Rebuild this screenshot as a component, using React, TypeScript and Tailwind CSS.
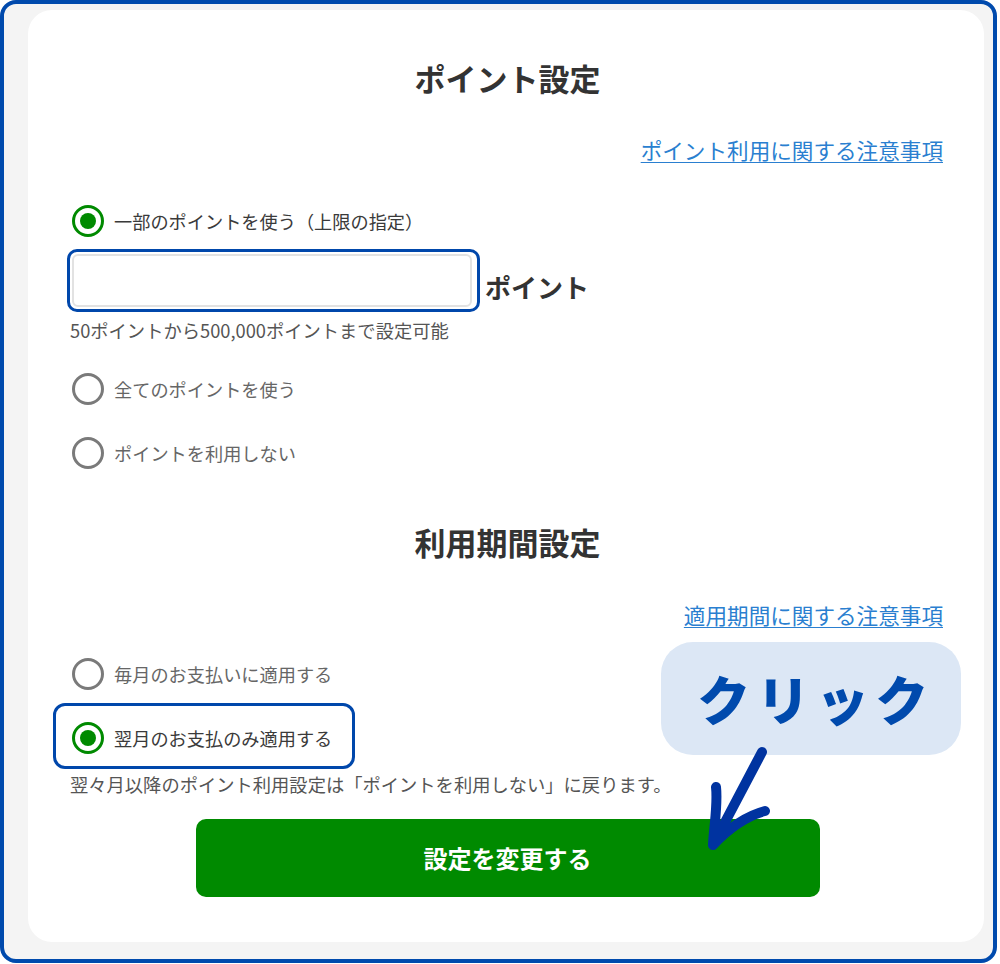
import React from "react";

const FONT = { fontFamily: '"Noto Sans CJK JP", "Noto Sans", sans-serif' };

function Radio({ checked }: { checked?: boolean }) {
  return checked ? (
    <span className="flex h-[32px] w-[32px] shrink-0 items-center justify-center rounded-full border-[3px] border-[#008a00] bg-white">
      <span className="h-[16px] w-[16px] rounded-full bg-[#008a00]" />
    </span>
  ) : (
    <span className="h-[32px] w-[32px] shrink-0 rounded-full border-[3px] border-[#7a7a7a] bg-white" />
  );
}

function Option({ label, checked }: { label: string; checked?: boolean }) {
  return (
    <label className="flex items-center gap-[10px]">
      <Radio checked={checked} />
      <span className={`text-[18.2px] leading-[24px] ${checked ? "text-[#3a3a3a]" : "text-[#666]"}`}>
        {label}
      </span>
    </label>
  );
}

export default function App() {
  return (
    <div style={FONT} className="h-[964px] w-[1000px] bg-white">
      <div className="flex h-[963px] w-[997px] rounded-[16px] border-[4px] border-[#004aad] bg-[#f4f4f4] pb-[17px] pl-[24px] pr-[9px] pt-[6px]">
        <div className="relative flex-1 rounded-[24px] bg-white pb-[43px] pl-[44px] pr-[41px] pt-[48px]">
          <h2 className="text-center text-[31px] font-bold leading-[40px] text-[#333]">ポイント設定</h2>

          <div className="mt-[38px] text-right">
            <a href="#" className="text-[21.6px] leading-[28px] text-[#2a7fd0] underline decoration-1 underline-offset-[3px]">
              ポイント利用に関する注意事項
            </a>
          </div>

          <div className="mt-[41px]">
            <Option label="一部のポイントを使う（上限の指定）" checked />
          </div>

          <div className="ml-[-5px] mt-[12px] flex">
            <div className="rounded-[10px] border-[3px] border-[#0047ab] p-[2px] pr-[5px]">
              <input className="block h-[53px] w-[400px] rounded-[6px] border-2 border-[#e2e2e2] bg-white px-3 text-[18px] outline-none" />
            </div>
            <span className="mb-[9px] ml-[5px] self-end text-[26px] font-bold leading-[32px] text-[#333]">ポイント</span>
          </div>

          <p className="ml-[-2px] mt-[6px] text-[18.3px] leading-[24px] text-[#555]">
            50ポイントから500,000ポイントまで設定可能
          </p>

          <div className="mt-[31px]">
            <Option label="全てのポイントを使う" />
          </div>
          <div className="mt-[32px]">
            <Option label="ポイントを利用しない" />
          </div>

          <h2 className="mt-[53px] text-center text-[31px] font-bold leading-[40px] text-[#333]">利用期間設定</h2>

          <div className="mt-[39px] text-right">
            <a href="#" className="text-[21.6px] leading-[28px] text-[#2a7fd0] underline decoration-1 underline-offset-[3px]">
              適用期間に関する注意事項
            </a>
          </div>

          <div className="mt-[29px]">
            <Option label="毎月のお支払いに適用する" />
          </div>

          <div className="ml-[-19px] mt-[13px] inline-flex rounded-[12px] border-[3px] border-[#0047ab] pb-[12px] pl-[16px] pr-[20px] pt-[16px]">
            <Option label="翌月のお支払のみ適用する" checked />
          </div>

          <p className="ml-[-2px] mt-[3px] text-[18.3px] leading-[24px] text-[#555]">
            翌々月以降のポイント利用設定は「ポイントを利用しない」に戻ります。
          </p>

          <button className="mx-auto mt-[23px] flex h-[78px] w-[624px] items-center justify-center rounded-[10px] bg-[#008a00] text-[24px] font-bold text-white">
            設定を変更する
          </button>

          <div className="absolute left-[633px] top-[632px] flex h-[113px] w-[300px] items-center justify-center rounded-[32px] bg-[#dce7f5]">
            <span className="pl-[10px] text-[53px] font-black leading-none tracking-[0.12em] text-[#004aad]">クリック</span>
          </div>

          <svg className="absolute left-[644px] top-[730px]" width="110" height="120" viewBox="0 0 110 120" fill="none">
            <path
              d="M90 12 L41 105 M44 47 C 46 65, 42 85, 41 105 M93 71 C 74 76, 56 89, 41 105"
              stroke="#0033a0"
              strokeWidth="10"
              strokeLinecap="round"
              strokeLinejoin="round"
            />
          </svg>
        </div>
      </div>
    </div>
  );
}
